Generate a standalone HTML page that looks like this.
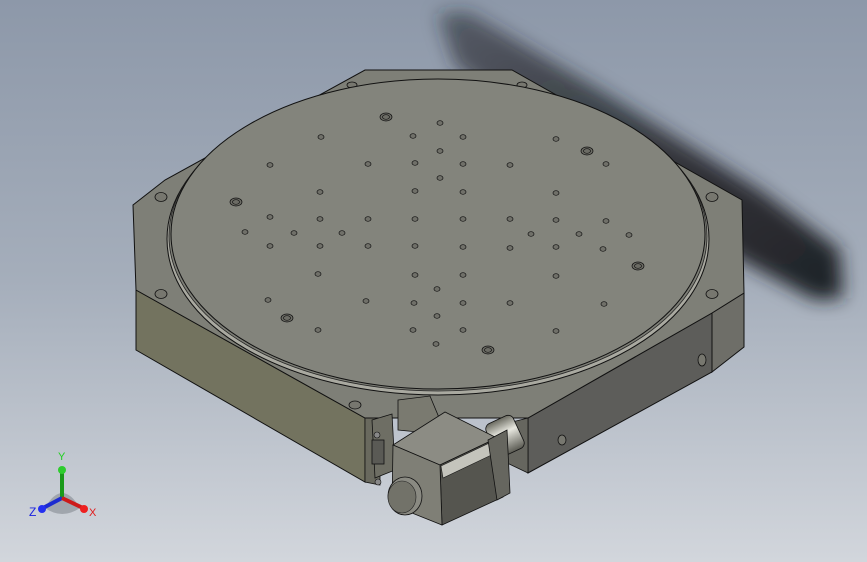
<!DOCTYPE html>
<html><head><style>
html,body{margin:0;padding:0;width:867px;height:562px;overflow:hidden;background:#aab2bf}
svg{display:block}
text{font-family:"Liberation Sans",sans-serif}
</style></head><body>
<svg width="867" height="562" viewBox="0 0 867 562" xmlns="http://www.w3.org/2000/svg">
<defs>
<linearGradient id="bg" x1="0" y1="0" x2="0" y2="1">
<stop offset="0" stop-color="#8d98a9"/><stop offset="0.5" stop-color="#a5aebb"/><stop offset="1" stop-color="#d2d6dc"/>
</linearGradient>
<filter id="bl" x="-30%" y="-30%" width="160%" height="160%"><feGaussianBlur stdDeviation="9"/></filter>
<linearGradient id="cyl" x1="0" y1="0" x2="0" y2="1"><stop offset="0" stop-color="#6a6a60"/><stop offset="0.4" stop-color="#e8e8e0"/><stop offset="1" stop-color="#5a5a52"/></linearGradient>
<linearGradient id="sh" x1="0" y1="0" x2="1" y2="1"><stop offset="0" stop-color="#23262b" stop-opacity="0.55"/><stop offset="0.6" stop-color="#23262b" stop-opacity="0.9"/><stop offset="1" stop-color="#1e2125" stop-opacity="1"/></linearGradient>
</defs>
<rect width="867" height="562" fill="url(#bg)"/>
<!-- shadow -->
<path d="M438,14 L468,12 L600,90 L760,190 L840,250 L843,298 L815,300 L740,260 L600,170 L455,65 Z" fill="url(#sh)" filter="url(#bl)"/>
<!-- base side faces -->
<polygon points="136,290 365,418 365,482 136,350" fill="#73735f" stroke="#111" stroke-width="1"/>
<polygon points="528,418 712,313 712,372 528,473" fill="#5d5d5a" stroke="#111" stroke-width="1"/>
<polygon points="712,313 744,293 744,347 712,372" fill="#6e6e68" stroke="#111" stroke-width="1"/>
<polygon points="500,425 528,418 528,473 505,462" fill="#66665f" stroke="#111" stroke-width="0.8"/>
<polygon points="365,418 380,412 380,485 365,482" fill="#69695e" stroke="#111" stroke-width="0.8"/>
<!-- base top face -->
<polygon points="365,70 512,70 742,200 744,293 712,313 528,418 365,418 136,290 133,205 165,180" fill="#7e7f77" stroke="#111" stroke-width="1"/>
<!-- corner holes -->
<g fill="#77776f" stroke="#111" stroke-width="0.8">
<ellipse cx="161" cy="197" rx="6" ry="4.5"/><ellipse cx="161" cy="294" rx="6" ry="4.5"/>
<ellipse cx="712" cy="197" rx="6" ry="4.5"/><ellipse cx="712" cy="294" rx="6" ry="4.5"/>
<ellipse cx="352" cy="85" rx="5" ry="3"/><ellipse cx="522" cy="85" rx="5" ry="3"/>
<ellipse cx="355" cy="405" rx="6" ry="4"/>
<ellipse cx="702" cy="360" rx="4" ry="6"/><ellipse cx="562" cy="440" rx="4" ry="5"/>
</g>
<!-- plate rim -->
<ellipse cx="438" cy="239" rx="271" ry="156" fill="#a9a9a0" stroke="#111" stroke-width="1"/>
<ellipse cx="438" cy="236" rx="269" ry="155" fill="#7d7e76" stroke="#222" stroke-width="0.8"/>
<ellipse cx="438" cy="234" rx="267" ry="155" fill="#83847c" stroke="#111" stroke-width="1"/>
<!-- holes -->
<g fill="#707069" stroke="#111" stroke-width="0.7">
<ellipse cx="440" cy="123" rx="3" ry="2.3"/><ellipse cx="321" cy="137" rx="3" ry="2.3"/><ellipse cx="413" cy="136" rx="3" ry="2.3"/><ellipse cx="463" cy="137" rx="3" ry="2.3"/><ellipse cx="556" cy="139" rx="3" ry="2.3"/><ellipse cx="440" cy="151" rx="3" ry="2.3"/>
<ellipse cx="270" cy="165" rx="3" ry="2.3"/><ellipse cx="368" cy="164" rx="3" ry="2.3"/><ellipse cx="415" cy="163" rx="3" ry="2.3"/><ellipse cx="463" cy="164" rx="3" ry="2.3"/><ellipse cx="510" cy="165" rx="3" ry="2.3"/><ellipse cx="606" cy="164" rx="3" ry="2.3"/><ellipse cx="440" cy="178" rx="3" ry="2.3"/>
<ellipse cx="320" cy="192" rx="3" ry="2.3"/><ellipse cx="415" cy="191" rx="3" ry="2.3"/><ellipse cx="463" cy="192" rx="3" ry="2.3"/><ellipse cx="556" cy="193" rx="3" ry="2.3"/>
<ellipse cx="270" cy="217" rx="3" ry="2.3"/><ellipse cx="320" cy="219" rx="3" ry="2.3"/><ellipse cx="368" cy="219" rx="3" ry="2.3"/><ellipse cx="415" cy="219" rx="3" ry="2.3"/><ellipse cx="463" cy="219" rx="3" ry="2.3"/><ellipse cx="510" cy="219" rx="3" ry="2.3"/><ellipse cx="556" cy="220" rx="3" ry="2.3"/><ellipse cx="606" cy="221" rx="3" ry="2.3"/>
<ellipse cx="245" cy="232" rx="3" ry="2.3"/><ellipse cx="294" cy="233" rx="3" ry="2.3"/><ellipse cx="342" cy="233" rx="3" ry="2.3"/><ellipse cx="531" cy="234" rx="3" ry="2.3"/><ellipse cx="579" cy="234" rx="3" ry="2.3"/><ellipse cx="629" cy="235" rx="3" ry="2.3"/>
<ellipse cx="270" cy="246" rx="3" ry="2.3"/><ellipse cx="320" cy="246" rx="3" ry="2.3"/><ellipse cx="368" cy="246" rx="3" ry="2.3"/><ellipse cx="415" cy="246" rx="3" ry="2.3"/><ellipse cx="463" cy="247" rx="3" ry="2.3"/><ellipse cx="510" cy="248" rx="3" ry="2.3"/><ellipse cx="556" cy="247" rx="3" ry="2.3"/><ellipse cx="603" cy="249" rx="3" ry="2.3"/>
<ellipse cx="318" cy="274" rx="3" ry="2.3"/><ellipse cx="415" cy="275" rx="3" ry="2.3"/><ellipse cx="463" cy="275" rx="3" ry="2.3"/><ellipse cx="556" cy="276" rx="3" ry="2.3"/><ellipse cx="437" cy="289" rx="3" ry="2.3"/>
<ellipse cx="268" cy="300" rx="3" ry="2.3"/><ellipse cx="366" cy="301" rx="3" ry="2.3"/><ellipse cx="414" cy="303" rx="3" ry="2.3"/><ellipse cx="463" cy="303" rx="3" ry="2.3"/><ellipse cx="510" cy="303" rx="3" ry="2.3"/><ellipse cx="604" cy="304" rx="3" ry="2.3"/><ellipse cx="437" cy="316" rx="3" ry="2.3"/>
<ellipse cx="318" cy="330" rx="3" ry="2.3"/><ellipse cx="413" cy="330" rx="3" ry="2.3"/><ellipse cx="463" cy="330" rx="3" ry="2.3"/><ellipse cx="556" cy="331" rx="3" ry="2.3"/><ellipse cx="436" cy="344" rx="3" ry="2.3"/>
</g>
<g fill="#6c6c65" stroke="#111" stroke-width="0.7">
<ellipse cx="386" cy="117" rx="6" ry="4"/><ellipse cx="386" cy="117" rx="3.5" ry="2.3"/>
<ellipse cx="587" cy="151" rx="6" ry="4"/><ellipse cx="587" cy="151" rx="3.5" ry="2.3"/>
<ellipse cx="236" cy="202" rx="6" ry="4"/><ellipse cx="236" cy="202" rx="3.5" ry="2.3"/>
<ellipse cx="638" cy="266" rx="6" ry="4"/><ellipse cx="638" cy="266" rx="3.5" ry="2.3"/>
<ellipse cx="287" cy="318" rx="6" ry="4"/><ellipse cx="287" cy="318" rx="3.5" ry="2.3"/>
<ellipse cx="488" cy="350" rx="6" ry="4"/><ellipse cx="488" cy="350" rx="3.5" ry="2.3"/>
</g>
<!-- under-plate bracket -->
<polygon points="398,400 430,396 440,420 418,432 398,430" fill="#7a7a70" stroke="#111" stroke-width="0.8"/>
<polygon points="372,420 392,414 395,470 375,478" fill="#6e6e64" stroke="#111" stroke-width="0.8"/>
<rect x="372" y="440" width="12" height="24" fill="#5a5a55" stroke="#111" stroke-width="0.8"/>
<circle cx="377" cy="435" r="3" fill="#888" stroke="#111" stroke-width="0.6"/><circle cx="378" cy="482" r="3" fill="#888" stroke="#111" stroke-width="0.6"/>
<!-- motor back cylinder -->
<rect x="490" y="418" width="30" height="36" rx="6" fill="url(#cyl)" stroke="#111" stroke-width="0.8" transform="rotate(-25 505 436)"/>
<!-- motor body -->
<polygon points="393,445 445,412 497,438 440,465" fill="#8c8c84" stroke="#111" stroke-width="0.8"/>
<polygon points="440,465 497,438 503,497 442,525" fill="#55554f" stroke="#111" stroke-width="0.8"/>
<polygon points="441,466 500,438 502,450 443,478" fill="#d8d8d0" stroke="#111" stroke-width="0.6" opacity="0.85"/>
<polygon points="488,440 507,430 510,493 497,500" fill="#66665f" stroke="#111" stroke-width="0.8"/>
<polygon points="393,445 440,465 442,525 392,505" fill="#7f7f76" stroke="#111" stroke-width="0.8"/>
<ellipse cx="405" cy="496" rx="17" ry="19" fill="#8a8a82" stroke="#111" stroke-width="0.8"/>
<ellipse cx="402" cy="497" rx="14" ry="16" fill="#727269" stroke="#222" stroke-width="0.6"/>
<!-- triad -->
<path d="M45,508 Q62,478 80,508 Q62,520 45,508Z" fill="#8f949b" opacity="0.7"/>
<line x1="62" y1="498" x2="62" y2="471" stroke="#1a9a1a" stroke-width="4"/>
<circle cx="62" cy="470" r="4" fill="#2ecc2e"/>
<line x1="62" y1="498" x2="43" y2="508" stroke="#1c2bd0" stroke-width="4"/>
<circle cx="42" cy="509" r="4" fill="#2430f0"/>
<line x1="62" y1="498" x2="83" y2="508" stroke="#cc1a1a" stroke-width="4"/>
<circle cx="84" cy="509" r="4" fill="#ee2020"/>
<text x="58" y="460" font-size="11" fill="#1fd01f">Y</text>
<text x="29" y="516" font-size="12" fill="#1a22e0">Z</text>
<text x="89" y="516" font-size="11" fill="#e01a1a">X</text>
</svg>
</body></html>
